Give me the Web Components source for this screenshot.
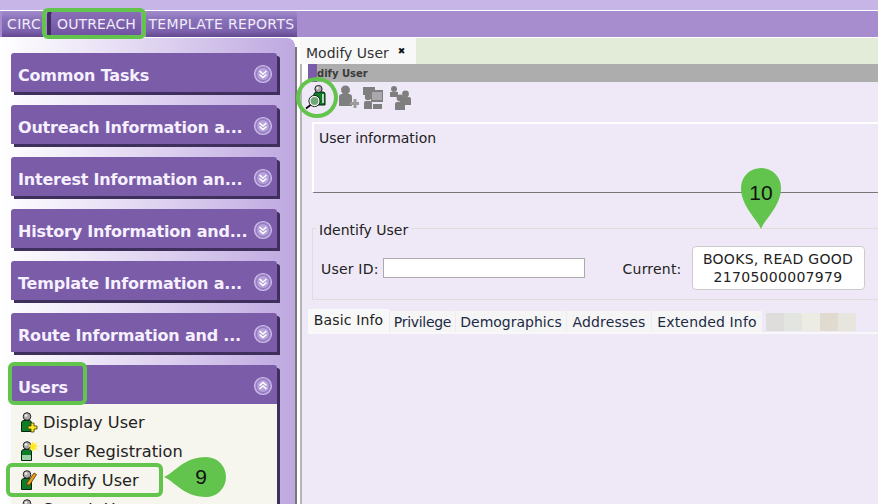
<!DOCTYPE html>
<html>
<head>
<meta charset="utf-8">
<title>Modify User</title>
<style>
  html, body { margin: 0; height: 504px; overflow: hidden; background: #fff; }
  body { font-family: "DejaVu Sans", Verdana, sans-serif; position: relative; }
</style>
</head>
<body>
<app-shell>
  <top-bar slot="top">
    <menu-tab style="width:41px" clip>CIRC</menu-tab>
    <menu-tab style="width:94px;margin-left:4px" active>OUTREACH</menu-tab>
    <menu-tab style="width:151px;margin-left:5px">TEMPLATE REPORTS</menu-tab>
  </top-bar>
  <side-panel slot="side">
    <accordion-item>Common Tasks</accordion-item>
    <accordion-item>Outreach Information a...</accordion-item>
    <accordion-item>Interest Information an...</accordion-item>
    <accordion-item>History Information and...</accordion-item>
    <accordion-item>Template Information a...</accordion-item>
    <accordion-item>Route Information and ...</accordion-item>
    <accordion-item open>Users
      <side-link slot="links" icon="display">Display User</side-link>
      <side-link slot="links" icon="register">User Registration</side-link>
      <side-link slot="links" icon="modify">Modify User</side-link>
      <side-link slot="links" icon="search">Search User</side-link>
    </accordion-item>
  </side-panel>
  <work-space slot="main"></work-space>
</app-shell>

<note-ring style="left:42px;top:8px;width:104px;height:31px"></note-ring>
<note-ring style="left:8px;top:362px;width:79px;height:43px"></note-ring>
<note-ring style="left:6px;top:463px;width:157px;height:34px"></note-ring>
<note-ring style="left:296px;top:77px;width:42px;height:41px" round></note-ring>
<note-pin style="left:164px;top:457px" dir="left">9</note-pin>
<note-pin style="left:741px;top:168px" dir="down">10</note-pin>

<script>
const person = `
  <path d="M2.500 19.500V11q0-2.500 2.500-2.500h5q2.500 0 2.500 2.500v8.500z" fill="#0f7d28" stroke="#06260b"/>
  <circle cx="8" cy="4.500" r="3.800" fill="#aaa" stroke="#222"/>
  <circle cx="7" cy="3.500" r="1.300" fill="#eee"/>`;

const ICONS = {
  display: person +
    '<path d="M12 11h3v3h3v3h-3v3h-3v-3H9v-3h3z" fill="#ffe81f" stroke="#3b3500" stroke-width=".8"/>',
  register: person +
    '<path d="M3 14h9v5H3z" fill="#bfe3c4" opacity=".8"/><path d="M14 0l1 3.500L18.500 1l-2 3.500 3.500.5-3.500 1.500 2.500 3-3.500-1.500L14 11l-1-3.500-3 1.500 1.500-3L9 4l3.500-.5z" fill="#ffe81f"/>',
  modify: person +
    '<path d="M8 13l7-10 2.500 1.500-6.500 10-3 1z" fill="#e8a020" stroke="#5a2d00" stroke-width=".8"/>',
  search: person
};

class AppShell extends HTMLElement {
  constructor() {
    super();
    this.attachShadow({ mode: 'open' }).innerHTML = `
      <style>
        :host { display: flex; flex-direction: column; width: 878px; height: 504px; overflow: hidden; }
        .strip { height: 10px; flex: none; background: #c8b5e8; border-bottom: 1px solid #fff; }
        .row { display: flex; flex: 1; min-height: 0; }
        .edge { flex: none; width: 2px; margin-top: 10px; background: #777; }
      </style>
      <div class="strip"></div>
      <slot name="top"></slot>
      <div class="row"><slot name="side"></slot><div class="edge"></div><slot name="main"></slot></div>`;
  }
}

class TopBar extends HTMLElement {
  constructor() {
    super();
    this.attachShadow({ mode: 'open' }).innerHTML = `
      <style>
        :host { display: flex; flex: none; height: 26px; background: #a78dcd; padding-left: 2px; box-sizing: border-box; }
      </style>
      <slot></slot>`;
  }
}

class MenuTab extends HTMLElement {
  constructor() {
    super();
    this.attachShadow({ mode: 'open' }).innerHTML = `
      <style>
        :host {
          display: flex; align-items: center; justify-content: center; flex: none; box-sizing: border-box;
          height: 26px; overflow: hidden; color: #f1ebfa; font-size: 14px; letter-spacing: .35px;
          background: linear-gradient(#a18bc9, #8a72ba 30%, #7d63ae 75%, #64498f);
          border-radius: 4px 4px 0 0; white-space: nowrap;
        }
        :host([active]) { background: linear-gradient(#8a6fb8, #6f52a0); box-shadow: inset 4px 0 0 #3e2c62; padding-left: 5px; letter-spacing: .1px; }
        :host([clip]) { justify-content: flex-start; padding-left: 5px; }
      </style>
      <slot></slot>`;
  }
}

class SidePanel extends HTMLElement {
  constructor() {
    super();
    this.attachShadow({ mode: 'open' }).innerHTML = `
      <style>
        :host {
          display: block; flex: none; width: 295px; margin-top: 1px; padding: 15px 0 0 11px; box-sizing: border-box;
          background: linear-gradient(90deg, #fff 0, #e4daf3 45%, #bea8e0 100%);
          border-top-right-radius: 8px; overflow: hidden; position: relative;
        }
      </style>
      <slot></slot>`;
  }
}

class AccordionItem extends HTMLElement {
  constructor() {
    super();
    const up = this.hasAttribute('open');
    this.attachShadow({ mode: 'open' }).innerHTML = `
      <style>
        :host { display: block; width: 266px; margin-bottom: 13px; box-shadow: 3px 3px 0 #3f2f5c; border-radius: 3px 3px 0 0; }
        .head {
          display: flex; align-items: center; justify-content: space-between; height: 39px; box-sizing: border-box;
          padding: 5px 4px 0 7px; background: #7a5ca9; border-radius: 3px 3px 0 0;
          color: #f6f0ff; font-size: 16px; letter-spacing: -.2px; font-weight: bold; white-space: nowrap;
        }
        svg { flex: none; margin-top: -3px; }
        .links { background: #f7f6ee; padding-top: 4px; }
      </style>
      <div class="head">
        <span><slot></slot></span>
        <svg width="20" height="20" viewBox="0 0 20 20">
          <circle cx="10" cy="10" r="8.500" fill="#a68dcf" stroke="#cbbce6" stroke-width="1.200"/>
          <circle cx="10" cy="10" r="6.500" fill="#b7a2dc" stroke="#8e73bf"/>
          <path d="${up ? 'M6.500 9.500L10 6.500l3.500 3M6.500 13L10 10l3.500 3' : 'M6.500 7l3.500 3 3.500-3M6.500 10.500l3.500 3 3.500-3'}" fill="none" stroke="#fff" stroke-width="1.600"/>
        </svg>
      </div>
      ${up ? '<div class="links"><slot name="links"></slot></div>' : ''}`;
  }
}

class SideLink extends HTMLElement {
  constructor() {
    super();
    const icon = ICONS[this.getAttribute('icon')];
    this.attachShadow({ mode: 'open' }).innerHTML = `
      <style>
        :host { display: flex; align-items: center; height: 29px; padding-left: 8px; color: #222; font-size: 16.200px; white-space: nowrap; }
        svg { flex: none; margin-right: 4px; }
      </style>
      <svg width="20" height="21" viewBox="0 0 20 21">${icon}</svg>
      <slot></slot>`;
  }
}

class WorkSpace extends HTMLElement {
  constructor() {
    super();
    const grey = '#7f7f7f';
    this.attachShadow({ mode: 'open' }).innerHTML = `
      <style>
        :host {
          display: flex; flex-direction: column; flex: 1; min-width: 0; margin-left: 3px; margin-top: 1px;
          font-size: 14px; color: #222;
        }
        .tabs { display: flex; flex: none; height: 26px; background: #e2ecd9; }
        .doc { display: flex; align-items: center; width: 116px; padding: 4px 0 0 6px; box-sizing: border-box; background: #f8f8f8; color: #333; }
        .doc b { margin: 0 0 4px 9px; font-size: 9px; color: #111; }
        .rest { display: flex; flex-direction: column; flex: 1; min-height: 0; background: #efe8f6; border-left: 2px solid #b5b5b5; }
        .title { display: flex; flex: none; height: 18px; background: #fff; padding-left: 6px; font-size: 10px; font-weight: bold; color: #3a3a3a; }
        .title i { width: 9px; background: #7a5ca9; }
        .title span { flex: 1; display: flex; align-items: center; background: #adadad; }
        .tools { display: flex; flex: none; align-items: flex-start; height: 40px; padding: 2px 0 0 3px; box-sizing: border-box; }
        .info { flex: none; height: 71px; margin-left: 10px; padding: 6px 5px; box-sizing: border-box; border: solid #fff; border-width: 2px 0 0 2px; border-bottom: 1px solid #777; }
        .field {
          display: flex; align-items: center; flex: none; box-sizing: border-box; height: 72px; margin: 35px -10px 0 10px; padding: 0 0 0 8px;
          border: 1px solid #ddd; position: relative; letter-spacing: .2px;
        }
        .field span.leg { position: absolute; left: 3px; top: -7px; padding: 0 3px; background: #efe8f6; letter-spacing: 0; }
        .field input { width: 202px; height: 20px; box-sizing: border-box; margin: 8px 0 0 4px; border: 1px solid #aaa; background: #fff; padding: 0; }
        .field label { margin-top: 10px; white-space: nowrap; }
        .field label.cur { margin-left: 38px; }
        .who { flex: none; width: 173px; height: 44px; box-sizing: border-box; margin: 8px 0 0 10px; background: #fff; border: 1px solid #ccc; border-radius: 4px; text-align: center; font-size: 14px; line-height: 18px; padding-top: 3px; letter-spacing: .3px; white-space: nowrap; }
        .subtabs { display: flex; flex: none; gap: 1px; align-items: flex-end; height: 25px; margin: 7px 0 0 6px; letter-spacing: .15px; }
        .subtabs span { display: flex; align-items: center; justify-content: center; height: 21px; background: #f5f5f5; color: #1c2a45; white-space: nowrap; }
        .subtabs span.on { height: 23px; background: #f8f8f8; color: #222; padding-bottom: 2px; box-sizing: border-box; }
        .blur { display: flex; margin-left: 3px; height: 18px; margin-bottom: 1px; }
        .blur u { display: block; width: 18px; height: 18px; }
        .panel { flex: 1; margin-left: 6px; border-top: 2px solid #f8f8f8; }
      </style>
      <div class="tabs"><div class="doc">Modify User<b>&#10006;</b></div></div>
      <div class="rest">
      <div class="title"><i></i><span>dify User</span></div>
      <div class="tools">
        <svg width="24" height="26" viewBox="0 0 24 26">
          <path d="M7 20l2-10q.500-2 3-2h6q2 0 2 2v11H9z" fill="#0f7d28" stroke="#06260b"/>
          <path d="M17 10h2v9h-2z" fill="#fff" opacity=".7"/>
          <circle cx="13.500" cy="5" r="3.600" fill="#aaa" stroke="#222"/>
          <circle cx="12.500" cy="4" r="1.200" fill="#eee"/>
          <circle cx="9.500" cy="17" r="4.600" fill="#6fa878" stroke="#fff" stroke-width="1.400"/>
          <circle cx="9.500" cy="17" r="5.600" fill="none" stroke="#222"/>
          <path d="M5.500 21l-4.500 3.500" stroke="#000" stroke-width="1.700"/>
        </svg>
        <svg style="margin-left:8px" width="22" height="26" viewBox="0 0 22 26" fill="${grey}">
          <circle cx="8.500" cy="6" r="4.500"/><path d="M2 22V13q0-3 3-3h7q3 0 3 3v9z"/><path d="M13 18h3.500v-3h3v3H22v3h-2.500v3h-3v-3H13z" fill="#9b9b9b"/>
        </svg>
        <svg style="margin-left:3px" width="23" height="26" viewBox="0 0 23 26" fill="${grey}">
          <path d="M1 3h12v8H1zM9 6h12v12H9z"/><path d="M11 8v8M13 8v8M15 8v8M17 8v8M19 8v8" stroke="#d8d2dc"/>
          <circle cx="6" cy="13" r="3.200"/><path d="M2 25v-6q0-2 2-2h4q2 0 2 2v6z"/><path d="M11 20h9v5h-9z"/>
        </svg>
        <svg style="margin-left:4px" width="24" height="26" viewBox="0 0 24 26" fill="${grey}">
          <circle cx="5" cy="5" r="3"/><path d="M1 13V8h8v5z"/>
          <circle cx="16.500" cy="10" r="3.400"/><path d="M11 21v-6q0-2 2-2h7q2 0 2 2v6z"/>
          <circle cx="11" cy="14" r="3.400"/><path d="M6 26v-6q0-2 2-2h6q2 0 2 2v6z"/>
        </svg>
      </div>
      <div class="info">User information</div>
      <div class="field">
        <span class="leg">Identify User</span>
        <label>User ID:</label><input type="text">
        <label class="cur">Current:</label>
        <div class="who">BOOKS, READ GOOD<br>21705000007979</div>
      </div>
      <div class="subtabs">
        <span class="on" style="width:81px">Basic Info</span>
        <span style="width:65px;letter-spacing:-.3px">Privilege</span>
        <span style="width:110px;letter-spacing:0">Demographics</span>
        <span style="width:84px">Addresses</span>
        <span style="width:110px">Extended Info</span>
        <div class="blur"><u style="background:#dfdcdc"></u><u style="background:#e3e6e0"></u><u style="background:#ecebe4"></u><u style="background:#e1dad0"></u><u style="background:#e6e5de"></u></div>
      </div>
      <div class="panel"></div>
      </div>`;
  }
}

// callouts drawn on top of the screenshot
class NoteRing extends HTMLElement {
  constructor() {
    super();
    this.attachShadow({ mode: 'open' }).innerHTML = `
      <style>
        :host { position: absolute; display: block; box-sizing: border-box; border: 4px solid #62c44d; border-radius: 6px; }
        :host([round]) { border-radius: 50%; }
      </style>`;
  }
}

class NotePin extends HTMLElement {
  constructor() {
    super();
    const left = this.getAttribute('dir') === 'left';
    const path = left
      ? 'M0 20C10 16 20 0 42 0a20 20 0 0 1 0 40C20 40 10 24 0 20z'
      : 'M20 61C16 51 0 38 0 20a20 20 0 0 1 40 0C40 38 24 51 20 61z';
    this.attachShadow({ mode: 'open' }).innerHTML = `
      <style>
        :host { position: absolute; display: block; width: ${left ? 62 : 40}px; height: ${left ? 40 : 61}px; }
        svg { display: block; }
        span { position: absolute; left: ${left ? 17 : 0}px; top: ${left ? 0 : 5}px; width: 40px; height: 40px; display: flex; align-items: center; justify-content: center; font: 21px "Liberation Sans", Arial, sans-serif; color: #111; }
      </style>
      <svg width="${left ? 62 : 40}" height="${left ? 40 : 61}"><path d="${path}" fill="#62c44d"/></svg>
      <span><slot></slot></span>`;
  }
}

customElements.define('app-shell', AppShell);
customElements.define('top-bar', TopBar);
customElements.define('menu-tab', MenuTab);
customElements.define('side-panel', SidePanel);
customElements.define('accordion-item', AccordionItem);
customElements.define('side-link', SideLink);
customElements.define('work-space', WorkSpace);
customElements.define('note-ring', NoteRing);
customElements.define('note-pin', NotePin);
</script>
</body>
</html>
